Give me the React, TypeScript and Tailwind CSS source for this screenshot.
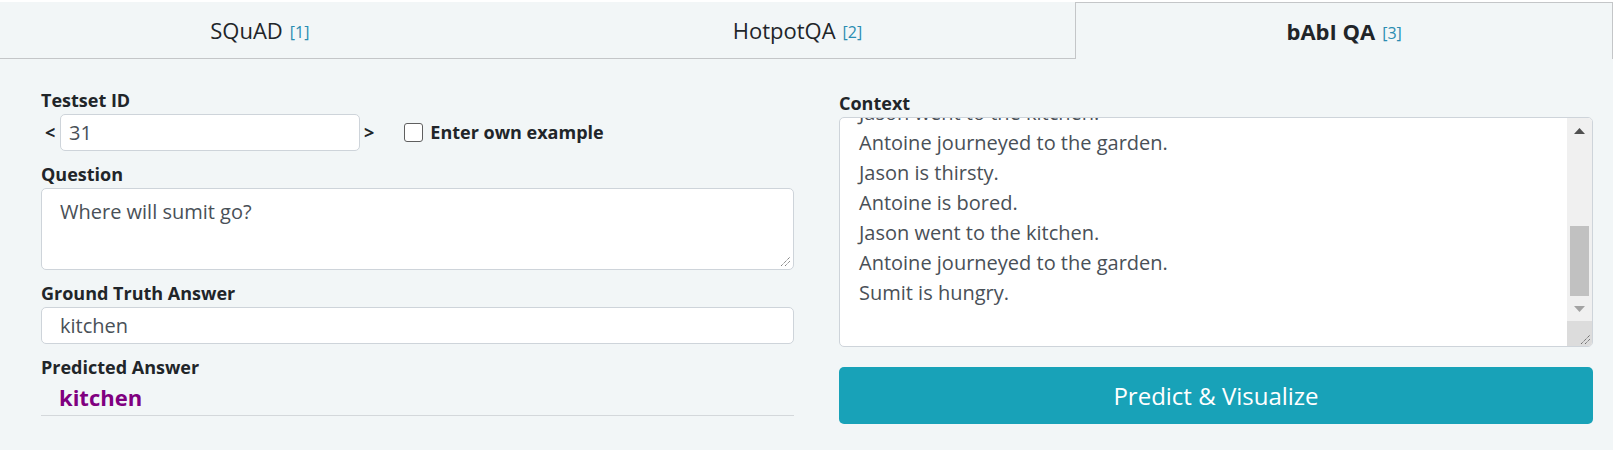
import React from "react";

function Tab({ name, num, active }: { name: string; num: string; active?: boolean }) {
  return (
    <div
      className={
        active
          ? "flex items-center justify-center border-t border-l border-r border-[#c4c6c8] bg-[#f2f6f7]"
          : "flex items-center justify-center pr-[18px] border-b border-[#c4c6c8] bg-[#f2f6f7]"
      }
    >
      <span className={active ? "text-[22px] font-bold text-[#212529]" : "text-[22px] text-[#212529]"}>{name}</span>
      <span className="ml-[7px] mt-[3px] text-[16px] text-[#2a8db2]">[{num}]</span>
    </div>
  );
}

function Label({ children, className = "" }: { children: React.ReactNode; className?: string }) {
  return <div className={"h-[24px] text-[18px] leading-[24px] font-bold text-[#212529] " + className}>{children}</div>;
}

function ResizeGrip({ color = "#6b6b6b" }: { color?: string }) {
  return (
    <svg width="11" height="11" viewBox="0 0 11 11">
      <line x1="1" y1="10" x2="10" y2="1" stroke={color} strokeWidth="1" strokeDasharray="1.2 0.8" />
      <line x1="5" y1="10" x2="10" y2="5" stroke={color} strokeWidth="1" strokeDasharray="1.2 0.8" />
    </svg>
  );
}

export default function App() {
  const lines = [
    "Jason went to the kitchen.",
    "Antoine journeyed to the garden.",
    "Jason is thirsty.",
    "Antoine is bored.",
    "Jason went to the kitchen.",
    "Antoine journeyed to the garden.",
    "Sumit is hungry.",
  ];
  return (
    <div className="w-[1613px] h-[450px] bg-[#f2f6f7] font-['Open_Sans',sans-serif] overflow-hidden">
      <div className="h-[2px] bg-white" />
      <div className="grid grid-cols-3 h-[57px]">
        <Tab name="SQuAD" num="1" />
        <Tab name="HotpotQA" num="2" />
        <Tab name="bAbI QA" num="3" active />
      </div>

      <div className="flex pl-[41px] pr-[20px] gap-[45px]">
        {/* Left column */}
        <div className="w-[753px] pt-[29px]">
          <Label>Testset ID</Label>
          <div className="mt-[2px] flex items-center h-[37px]">
            <span className="w-[19px] pl-[4px] text-[18px] font-bold text-[#212529]">&lt;</span>
            <div className="w-[300px] h-[37px] bg-white border border-[#ced4da] rounded-[5px] pl-[8px] flex items-center text-[20px] text-[#495057]">
              31
            </div>
            <span className="ml-[4px] text-[18px] font-bold text-[#212529]">&gt;</span>
            <span className="ml-[30px] w-[19px] h-[19px] bg-white border border-[#5f5f5f] rounded-[3px]" />
            <span className="ml-[7px] text-[18px] font-bold text-[#212529]">Enter own example</span>
          </div>

          <Label className="mt-[11px]">Question</Label>
          <div className="mt-[2px] h-[82px] bg-white border border-[#ced4da] rounded-[5px] pl-[18px] pt-[8px] flex flex-col">
            <div className="text-[20px] leading-[30px] text-[#495057]">Where will sumit go?</div>
            <div className="mt-auto self-end pr-[2px] pb-[2px]">
              <ResizeGrip />
            </div>
          </div>

          <Label className="mt-[11px]">Ground Truth Answer</Label>
          <div className="mt-[2px] h-[37px] bg-white border border-[#ced4da] rounded-[5px] pl-[18px] flex items-center text-[20px] text-[#495057]">
            kitchen
          </div>

          <Label className="mt-[11px]">Predicted Answer</Label>
          <div className="mt-[3px] pb-[3px] border-b border-[#d4d8db] pl-[18px] text-[22px] leading-[30px] font-bold text-[#800080]">
            kitchen
          </div>
        </div>

        {/* Right column */}
        <div className="w-[754px] pt-[32px]">
          <Label>Context</Label>
          <div className="mt-[2px] h-[230px] bg-white border border-[#ced4da] rounded-[5px] flex overflow-hidden">
            <div className="flex-1 overflow-hidden pl-[19px]">
              <div className="mt-[-20px] text-[20px] leading-[30px] text-[#495057]">
                {lines.map((l, i) => (
                  <div key={i}>{l}</div>
                ))}
              </div>
            </div>
            <div className="w-[25px] bg-[#f0f0f0] flex flex-col">
              <div className="h-[25px] flex items-center justify-center">
                <svg width="11" height="6" viewBox="0 0 11 6">
                  <polygon points="5.5,0 11,6 0,6" fill="#505050" />
                </svg>
              </div>
              <div className="h-[83px]" />
              <div className="h-[70px] mx-[3px] bg-[#c1c1c1]" />
              <div className="h-[25px] flex items-center justify-center">
                <svg width="11" height="6" viewBox="0 0 11 6">
                  <polygon points="0,0 11,0 5.5,6" fill="#a3a3a3" />
                </svg>
              </div>
              <div className="flex-1 bg-[#dcdcdc] flex items-end justify-end pr-[1px] pb-[1px]">
                <ResizeGrip color="#5a5a5a" />
              </div>
            </div>
          </div>

          <button className="mt-[20px] w-full h-[57px] rounded-[5px] bg-[#18a2b8] text-white text-[24px] flex items-center justify-center">
            Predict &amp; Visualize
          </button>
        </div>
      </div>
    </div>
  );
}
